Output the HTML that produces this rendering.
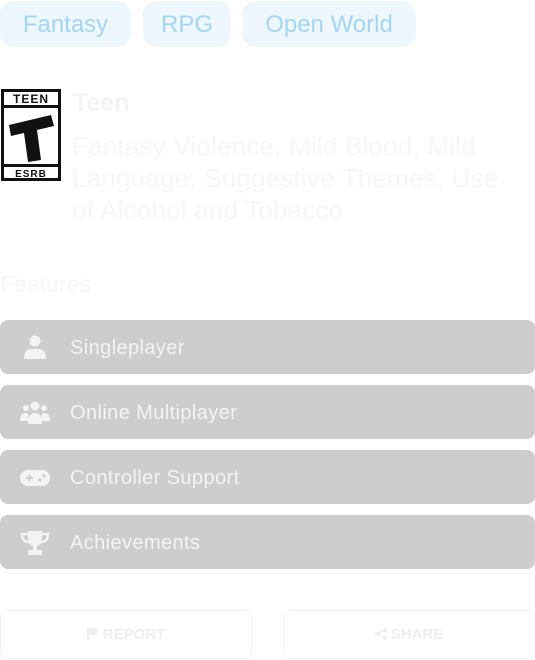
<!DOCTYPE html>
<html><head><meta charset="utf-8"><style>
*{box-sizing:border-box;margin:0;padding:0}
body{width:535px;height:660px;background:#fff;font-family:"Liberation Sans",sans-serif;position:relative;overflow:hidden}
.tag{position:absolute;top:1px;height:46px;border-radius:14px;background:#eef7fd;color:#a3d6f6;font-size:24px;line-height:48px;text-align:center}
.row{position:absolute;left:0;width:535px;height:54px;border-radius:8px;background:#cdcdcd;color:#f3f3f3;font-size:20px;letter-spacing:0.4px}
.row span{position:absolute;left:70px;top:0;line-height:57px}
.row svg{position:absolute;left:20px;top:15px}
.btn{position:absolute;top:610px;width:252px;height:49px;border:1.5px solid #f3f3f3;border-radius:7px;color:#eeeeee;font-weight:bold;font-size:15px;text-align:center;line-height:48px}
.faint{position:absolute;color:#f6f6f6}
</style></head><body>
<div class="tag" style="left:0;width:131px">Fantasy</div>
<div class="tag" style="left:143px;width:88px">RPG</div>
<div class="tag" style="left:242px;width:174px">Open World</div>

<svg style="position:absolute;left:1px;top:89px" width="60" height="92" viewBox="0 0 60 92">
<rect x="0" y="0" width="60" height="92" fill="#111"/>
<rect x="3" y="3" width="54" height="13" fill="#fff"/>
<rect x="3" y="19" width="54" height="56" fill="#fff"/>
<rect x="3" y="78" width="54" height="11" fill="#fff"/>
<text x="30" y="14" font-family="Liberation Sans" font-weight="bold" font-size="12" text-anchor="middle" fill="#111" letter-spacing="1">TEEN</text>
<text x="30" y="88" font-family="Liberation Sans" font-weight="bold" font-size="10" text-anchor="middle" fill="#111" letter-spacing="1">ESRB</text>
<polygon points="8,36 50,26 53,37 36,41 40,71 27,73 23,44 10,47" fill="#111"/>
</svg>
<div class="faint" style="left:73px;top:89px;font-size:25px;font-weight:bold;color:#f3f3f3">Teen</div>
<div class="faint" style="left:72px;top:130px;font-size:26px;line-height:32px;width:440px;letter-spacing:0.2px">Fantasy Violence, Mild Blood, Mild Language, Suggestive Themes, Use of Alcohol and Tobacco</div>
<div class="faint" style="left:0px;top:271px;font-size:23px">Features</div>

<div class="row" style="top:320px"><svg width="30" height="26" viewBox="0 0 30 26"><circle cx="15" cy="6" r="5.5" fill="#f3f3f3"/><path d="M4 24 Q4 14 11 14 H19 Q26 14 26 24 Z" fill="#f3f3f3"/></svg><span>Singleplayer</span></div>
<div class="row" style="top:385px"><svg width="30" height="26" viewBox="0 0 30 26"><circle cx="15" cy="6" r="4.5" fill="#f3f3f3"/><circle cx="6" cy="8" r="3" fill="#f3f3f3"/><circle cx="24" cy="8" r="3" fill="#f3f3f3"/><path d="M8 24 Q8 13 15 13 Q22 13 22 24Z" fill="#f3f3f3"/><path d="M0 21 Q0 13 6 13 Q9 13 9 21Z M30 21 Q30 13 24 13 Q21 13 21 21Z" fill="#f3f3f3"/></svg><span>Online Multiplayer</span></div>
<div class="row" style="top:450px"><svg width="30" height="26" viewBox="0 0 30 26"><rect x="0" y="5" width="30" height="16" rx="8" fill="#f3f3f3"/><path d="M6 13h7M9.5 9.5v7" stroke="#cdcdcd" stroke-width="2"/><circle cx="20" cy="15" r="1.6" fill="#cdcdcd"/><circle cx="24" cy="11" r="1.6" fill="#cdcdcd"/></svg><span>Controller Support</span></div>
<div class="row" style="top:515px"><svg width="30" height="26" viewBox="0 0 30 26"><path d="M8 1 H22 V9 Q22 16 15 16 Q8 16 8 9Z" fill="#f3f3f3"/><path d="M8 4 H2 Q2 12 9 12 M22 4 H28 Q28 12 21 12" stroke="#f3f3f3" stroke-width="2.5" fill="none"/><rect x="13" y="15" width="4" height="5" fill="#f3f3f3"/><rect x="8" y="20" width="14" height="5" rx="1" fill="#f3f3f3"/></svg><span>Achievements</span></div>

<div class="btn" style="left:0"><svg width="10" height="12" viewBox="0 0 10 12" style="vertical-align:-1px;margin-right:6px"><path d="M0 0H10V7H2V12H0Z" fill="#eeeeee"/></svg>REPORT</div>
<div class="btn" style="left:283px"><svg width="12" height="12" viewBox="0 0 12 12" style="vertical-align:-1px;margin-right:4px"><circle cx="10" cy="2" r="2" fill="#eee"/><circle cx="2" cy="6" r="2" fill="#eee"/><circle cx="10" cy="10" r="2" fill="#eee"/><path d="M10 2L2 6L10 10" stroke="#eee" stroke-width="1.3" fill="none"/></svg>SHARE</div>
</body></html>
